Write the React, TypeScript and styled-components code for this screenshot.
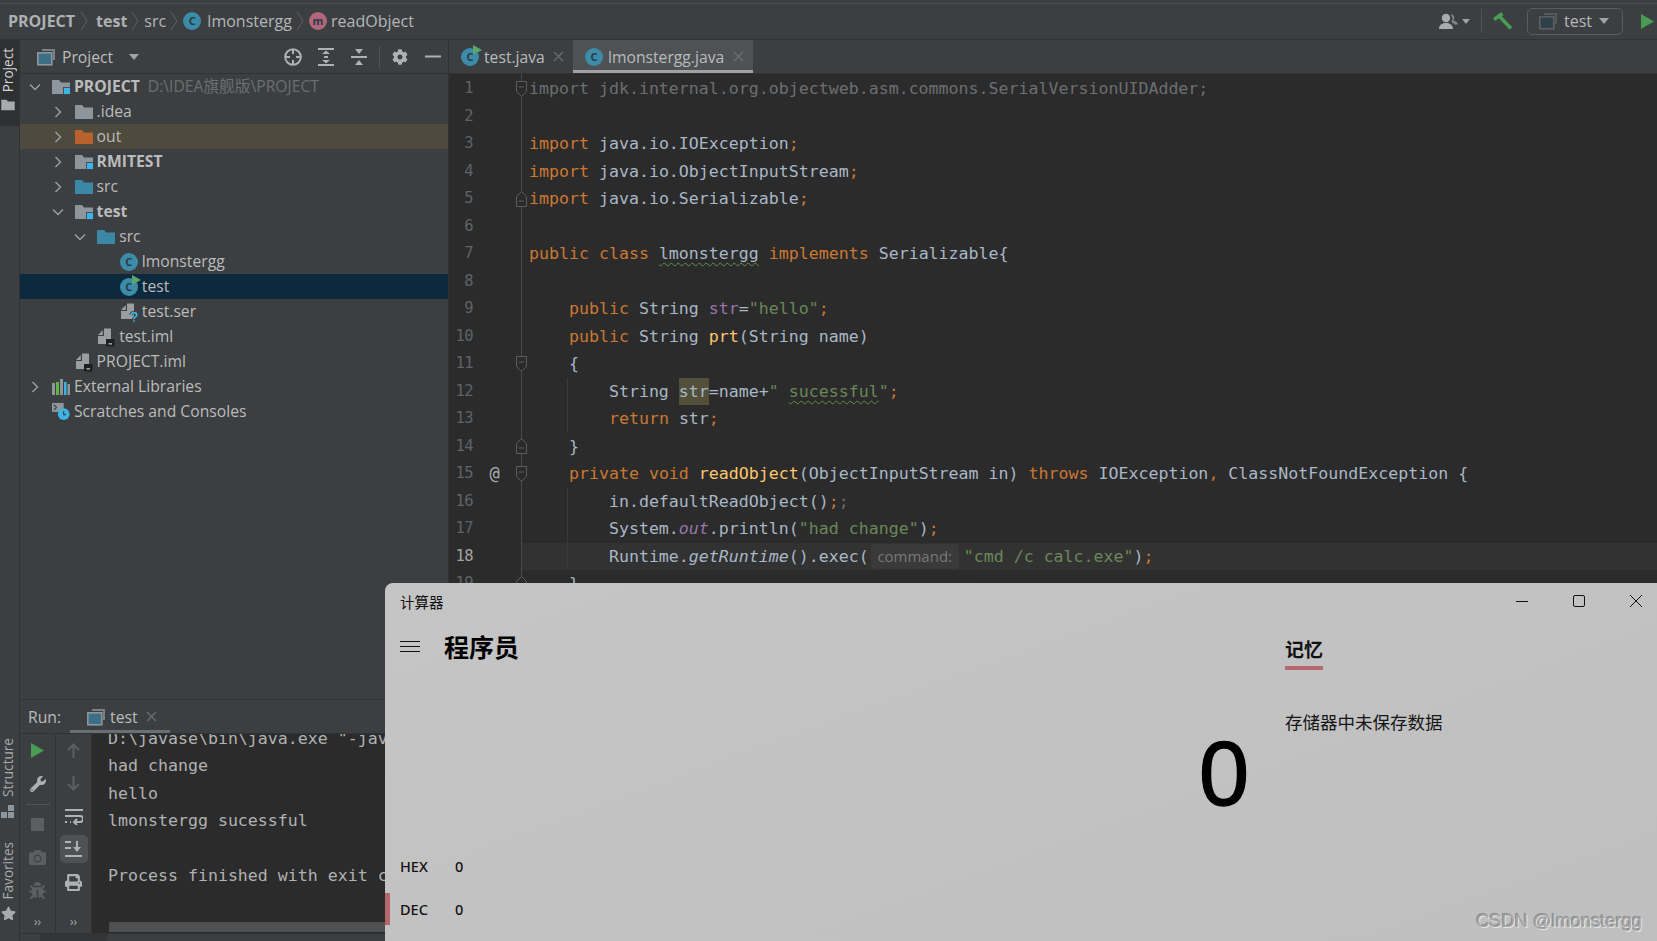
import React from 'react';
import styled, { createGlobalStyle } from 'styled-components';
import { FaCamera, FaBug, FaCog, FaPrint, FaStar, FaWrench } from 'react-icons/fa';

const UI = `"Open Sans", "Noto Sans CJK SC", sans-serif`;
const MONO = `"DejaVu Sans Mono", monospace`;

const Global = createGlobalStyle`
  html, body { margin: 0; padding: 0; width: 100%; height: 100%; overflow: hidden; background: #3c3f41; }
  #root { width: 1657px; height: 941px; }
  * { box-sizing: border-box; }
  svg { display: block; flex: none; }
`;

const Page = styled.div`
  position: relative; width: 1657px; height: 941px; display: flex; flex-direction: column;
  background: #3c3f41; color: #bbbbbb; font-family: ${UI}; font-size: 15.7px; overflow: hidden;
`;

/* ---------- top bar ---------- */
const TopBar = styled.header`
  height: 40px; flex: none; display: flex; align-items: center; padding: 3px 0 0 8px;
  border-bottom: 1px solid #323232; box-shadow: inset 0 3px 0 #3c3f41, inset 0 4px 0 #4d5052;
`;
const Crumb = styled.span<{ $bold?: boolean }>`
  font-size: 16px; font-weight: ${p => (p.$bold ? 700 : 400)}; color: ${p => (p.$bold ? '#aeb0b2' : '#b4b6b8')};
  white-space: pre;
`;
const CrumbSep = styled.span<{ $tight?: boolean }>`
  margin: ${p => (p.$tight ? '0 5px 0 4px' : '0 8px 0 5px')}; display: flex;
`;
const CrumbGap = styled.span`
  width: 2px; flex: none;
`;
const TopRight = styled.div`
  margin-left: auto; display: flex; align-items: center; height: 100%;
`;
const VSep = styled.div<{ $h?: number; $m?: string }>`
  width: 1px; height: ${p => p.$h ?? 24}px; background: #515456; margin: ${p => p.$m ?? '0'};
`;
const RunConfig = styled.div`
  width: 96px; height: 27px; margin: 0 18px 0 14px; border: 1.5px solid #5a5d5f; border-radius: 5px;
  display: flex; align-items: center; padding-left: 11px; gap: 7px;
`;
const Caret = styled.span<{ $c?: string; $w?: number }>`
  width: 0; height: 0; border-style: solid; border-color: ${p => p.$c ?? '#a0a2a4'} transparent transparent transparent;
  border-width: ${p => ((p.$w ?? 10) * 0.6)}px ${p => (p.$w ?? 10) / 2}px 0 ${p => (p.$w ?? 10) / 2}px;
`;
const UserWrap = styled.span`
  margin-right: 4px;
`;

/* ---------- main frame ---------- */
const Frame = styled.div`
  flex: 1; min-height: 0; display: flex;
`;
const Strip = styled.aside`
  width: 20px; flex: none; display: flex; flex-direction: column; border-right: 1px solid #323232;
`;
const StripButton = styled.div<{ $active?: boolean }>`
  display: flex; flex-direction: column; align-items: center; gap: 7px; font-size: 13.6px; width: 19px;
  background: ${p => (p.$active ? '#2f3031' : 'transparent')};
  color: ${p => (p.$active ? '#d4d5d6' : '#a8aaac')};
  padding: ${p => (p.$active ? '8px 3px 15px 0' : '0 3px 0 0')};
`;
const StripLabel = styled.span`
  writing-mode: vertical-rl; transform: rotate(180deg); line-height: 16px; white-space: pre;
`;
const StripBottom = styled.div`
  margin-top: auto; margin-bottom: 20px; display: flex; flex-direction: column; gap: 24px;
`;
const Workspace = styled.div`
  flex: 1; min-width: 0; display: flex; flex-direction: column;
`;
const Upper = styled.div`
  height: 659px; flex: none; display: flex;
`;

/* ---------- project tree ---------- */
const Sidebar = styled.section`
  width: 429px; flex: none; border-right: 1px solid #323232; display: flex; flex-direction: column;
`;
const PaneHeader = styled.div`
  height: 34px; flex: none; display: flex; align-items: center; padding-left: 17px;
  border-bottom: 1px solid #323232;
`;
const PaneTitle = styled.span`
  margin: 1px 16px 0 7px;
`;
const PaneTools = styled.div`
  margin-left: 144px; display: flex; align-items: center;
`;
const Tree = styled.div`
  display: flex; flex-direction: column;
`;
const Row = styled.div<{ $depth: number; $tone?: 'out' | 'sel' }>`
  height: 25px; display: flex; align-items: center; white-space: pre;
  padding-left: ${p => 8 + p.$depth * 22.6}px;
  background: ${p => (p.$tone === 'out' ? '#4e4a3e' : p.$tone === 'sel' ? '#0d293e' : 'transparent')};
`;
const Twist = styled.span`
  width: 14px; margin-right: 10px; flex: none; display: flex; justify-content: center;
`;
const RowLabel = styled.span<{ $bold?: boolean }>`
  margin: 0 0 2px 4px; font-weight: ${p => (p.$bold ? 700 : 400)};
`;
const PathHint = styled.span`
  margin: 0 0 2px 8px; color: #6b6e70;
`;
const Badge = styled.span<{ $kind: 'c' | 'm' }>`
  position: relative; width: 18px; height: 18px; flex: none; border-radius: 50%;
  background: ${p => (p.$kind === 'c' ? '#3c8ba8' : '#b2667c')};
  color: #263b44; font: 700 11px/17px ${UI}; text-align: center;
`;
const RunMark = styled.svg`
  position: absolute; top: -3px; right: -3px;
`;

/* ---------- editor ---------- */
const Editor = styled.section`
  flex: 1; min-width: 0; display: flex; flex-direction: column;
`;
const Tabs = styled.div`
  height: 34px; flex: none; display: flex; border-bottom: 1px solid #323232;
`;
const Tab = styled.div<{ $active?: boolean; $w: number }>`
  position: relative; width: ${p => p.$w}px; display: flex; align-items: center; padding-left: 12px;
  background: ${p => (p.$active ? '#4e5254' : 'transparent')};
  ${p => (p.$active ? 'box-shadow: inset 0 -3px 0 #a0a3a6;' : '')}
`;
const TabLabel = styled.span`
  margin: 1px 0 0 5px; color: #b9bbbd;
`;
const TabClose = styled.span`
  position: absolute; right: 9px; top: 11px;
`;
const Code = styled.div`
  flex: 1; min-height: 0; overflow: hidden; padding-top: 1px;
  background: linear-gradient(#484a4b, #484a4b) 72px 0 / 1px 100% no-repeat, #2b2b2b;
  font: 16.6px/27.53px ${MONO}; color: #a9b7c6;
`;
const Line = styled.div<{ $current?: boolean; $guide?: boolean }>`
  position: relative; height: 27.53px; display: flex; white-space: pre;
  ${p => (p.$current ? 'background: linear-gradient(#323232, #323232) 73px 0 no-repeat;' : '')}
  ${p => p.$guide ? `&::before { content: ''; position: absolute; left: 118px; top: 0; bottom: 0; width: 1px; background: #3b3b3b; }` : ''}
`;
const LineNo = styled.span<{ $current?: boolean }>`
  width: 24px; flex: none; text-align: right; font-family: ${MONO}; font-size: 15.5px;
  color: ${p => (p.$current ? '#a4a3a3' : '#606366')}; letter-spacing: -0.6px;
`;
const Annot = styled.span`
  width: 43px; flex: none; text-align: center; color: #a9adb0; font-size: 17px;
`;
const Fold = styled.span`
  width: 13px; flex: none; display: flex; align-items: center;
`;
const Tok = styled.span<{ $k?: string }>`
  color: ${p => ({ kw: '#cc7832', str: '#6a8759', wstr: '#6a8759', fld: '#9876aa', ifl: '#9876aa', mth: '#ffc66d', dim: '#6c6f71' } as Record<string, string>)[p.$k ?? ''] ?? '#a9b7c6'};
  ${p => (p.$k === 'ifl' || p.$k === 'it' ? 'font-style: italic;' : '')}
  ${p => (p.$k === 'wav' || p.$k === 'wstr' ? 'text-decoration: underline wavy #5f8f4f 1px; text-underline-offset: 3px;' : '')}
  ${p => (p.$k === 'hl' ? 'background: #52503a; display: inline-block; height: 27.53px;' : '')}
`;
const Inlay = styled.span`
  display: inline-block; width: 88px; height: 25px; margin: 1px 5px 0 2px; border-radius: 4px;
  background: #3a3a3a; color: #787878; font: 15px/24px ${UI}; text-align: center;
`;

/* ---------- run panel ---------- */
const RunPanel = styled.section`
  flex: 1; min-height: 0; display: flex; flex-direction: column; border-top: 1px solid #323232;
`;
const RunHeader = styled.div`
  height: 34px; flex: none; display: flex; align-items: center; padding-left: 8px; border-bottom: 1px solid #323232;
`;
const RunTab = styled.div`
  height: 100%; width: 100px; margin-left: 9px; display: flex; align-items: center; padding-left: 17px; gap: 5px;
  box-shadow: inset 0 -3px 0 #6b6f72;
`;
const RunTabClose = styled.span`
  margin-left: 3px;
`;
const RunBody = styled.div`
  flex: 1; min-height: 0; display: flex;
`;
const ToolCol = styled.div<{ $w: number }>`
  width: ${p => p.$w}px; flex: none; display: flex; flex-direction: column; align-items: center;
  padding-bottom: 3px; border-right: 1px solid #323232; color: #afb1b3;
`;
const ToolBtn = styled.div<{ $on?: boolean; $dim?: boolean }>`
  width: 28px; height: 33px; display: flex; align-items: center; justify-content: center;
  color: ${p => (p.$dim ? '#5c5f61' : '#afb1b3')};
  ${p => (p.$on ? 'background: #4e5254; border-radius: 5px; height: 28px; margin: 2px 0 3px;' : '')}
`;
const ToolSep = styled.div`
  width: 24px; height: 1px; background: #515456; margin: 4px 0 3px;
`;
const More = styled.span`
  margin-top: auto; font-size: 12px; line-height: 16px; color: #a8aaac;
`;
const Console = styled.div`
  flex: 1; min-width: 0; display: flex; flex-direction: column; background: #2b2b2b; padding-left: 16px;
  overflow: hidden;
`;
const Output = styled.pre`
  flex: 1; min-height: 0; margin: -9px 0 0; font: 16.6px/27.35px ${MONO}; color: #b0b2b3;
`;
const HScroll = styled.div`
  height: 10px; margin: 0 0 1px 1px; background: #4f5051; flex: none;
`;
const StatusBar = styled.footer`
  height: 8px; flex: none; border-top: 1px solid #323232; padding-left: 20px; display: flex;
`;
const StatusSeg = styled.div`
  width: 67px; height: 100%; background: #333537;
`;

/* ---------- calculator window ---------- */
const CalcWindow = styled.section`
  position: absolute; z-index: 2; left: 385px; top: 583px; right: 0; bottom: 0; border-radius: 8px 0 0 0;
  background: linear-gradient(160deg, #c5c5c5 0%, #c2c2c2 50%, #bfbfbf 100%);
  color: #000; font-family: "Noto Sans CJK SC", "Noto Sans", sans-serif; display: flex; flex-direction: column;
`;
const CalcTitle = styled.div`
  height: 40px; flex: none; display: flex; align-items: center; padding: 0 0 4px 15px; font-size: 14.5px; color: #111;
`;
const WinControls = styled.div`
  margin-left: auto; display: flex; align-items: center; gap: 45px; padding-right: 15px; margin-top: -1px;
`;
const CalcBody = styled.div`
  flex: 1; min-height: 0; display: flex;
`;
const CalcMain = styled.div`
  width: 900px; flex: none; display: flex; flex-direction: column;
`;
const CalcHead = styled.div`
  height: 52px; flex: none; display: flex; align-items: center; padding: 0 0 6px 15px; gap: 24px;
  font-size: 25px; font-weight: 700;
`;
const Display = styled.div`
  margin-top: 49px; padding-right: 36px; text-align: right; height: 100px;
  font: 400 90px/100px "Liberation Sans", sans-serif; -webkit-text-stroke: 1.4px #000;
`;
const RadixList = styled.div`
  margin-top: auto; padding-bottom: 16px; display: flex; flex-direction: column; gap: 11px;
`;
const RadixRow = styled.div<{ $active?: boolean }>`
  height: 32px; display: flex; align-items: center; padding-left: 10px;
  border-left: 5px solid ${p => (p.$active ? '#b5686b' : 'transparent')};
  font: 500 14.5px "Noto Sans", sans-serif; color: #111;
`;
const RadixName = styled.span`
  width: 55px;
`;
const Memory = styled.aside`
  flex: 1; min-width: 0; display: flex; flex-direction: column; align-items: flex-start; padding-top: 13px;
`;
const MemoryTab = styled.div`
  width: 38px; padding-bottom: 4px; font-size: 19px; font-weight: 700; line-height: 26px; white-space: nowrap;
  border-bottom: 4px solid #b5686b; color: #111;
`;
const MemoryEmpty = styled.div`
  margin-top: 39px; font-size: 17.5px; line-height: 26px; color: #151515;
`;
const Watermark = styled.div`
  position: absolute; right: 15px; bottom: 9px; font: 18.3px "Liberation Sans", sans-serif;
  color: #a3a4a4; text-shadow: 1px 1px 0 #e6e6e6, -1px -1px 0 #8a8a8a;
`;

/* ---------- icons ---------- */
const Chevron = ({ open, c = '#9da0a2' }: { open?: boolean; c?: string }) => (
  <svg width="12" height="12" viewBox="0 0 12 12" fill="none" stroke={c} strokeWidth="1.4">
    {open ? <path d="M1 3.5 6 8.5 11 3.5" /> : <path d="M3.5 1 8.5 6 3.5 11" />}
  </svg>
);
const CrumbChevron = () => (
  <svg width="8" height="20" viewBox="0 0 8 20" fill="none" stroke="#5f6264">
    <path d="M1 1 7 10 1 19" />
  </svg>
);
const Folder = ({ c = '#8c969c', mod, small }: { c?: string; mod?: boolean; small?: boolean }) => (
  <svg width={small ? 14 : 18} height={small ? 12 : 16} viewBox="0 0 18 16">
    <path d="M0 1h7l2 2.4h9V15H0z" fill={c} />
    {mod && <rect x="11.5" y="8.5" width="7" height="7" fill="#3db3e6" stroke="#3c3f41" strokeWidth=".8" />}
  </svg>
);
const FileDoc = ({ mark }: { mark: 'q' | 'box' }) => (
  <svg width="18" height="20" viewBox="0 0 18 20">
    <path d="M7 1.500h7V17H1V9h6z" fill="#9a9ea1" />
    <path d="M1 8 5.800 3V8z" fill="#9a9ea1" />
    {mark === 'box' ? (
      <g><rect x="9" y="12" width="8.500" height="7.500" fill="#1f1f1f" /><rect x="11.500" y="16.200" width="3.500" height="1.300" fill="#bbb" /></g>
    ) : (
      <g fill="none">
        <path d="M11 13c.3-3.200 5.700-3.200 5.700 0 0 2.200-2.800 2-2.800 4.300M13.900 18.200v1.600" stroke="#3c3f41" strokeWidth="3.400" />
        <path d="M11 13c.3-3.200 5.700-3.200 5.700 0 0 2.200-2.800 2-2.800 4.300M13.900 18.200v1.600" stroke="#3db3e6" strokeWidth="1.700" />
      </g>
    )}
  </svg>
);
const LibIcon = () => (
  <svg width="18" height="16" viewBox="0 0 18 16">
    <rect x="0" y="4" width="3" height="12" fill="#8c969c" />
    <rect x="4" y="3" width="3" height="13" fill="#62b543" />
    <rect x="8" y="0" width="3" height="16" fill="#8c969c" />
    <rect x="12" y="3" width="2.500" height="13" fill="#3db3e6" />
    <rect x="15.500" y="5" width="2.500" height="11" fill="#8c969c" />
  </svg>
);
const ScratchIcon = () => (
  <svg width="18" height="19" viewBox="0 0 20 19">
    <rect x="0" y="0" width="13" height="10" fill="#8c969c" />
    <path d="M2 2 5 5 2 8" fill="none" stroke="#3c3f41" strokeWidth="1.2" />
    <circle cx="13" cy="12.500" r="6.500" fill="#3db3e6" />
    <path d="M13 9v4h2.500" fill="none" stroke="#3c3f41" strokeWidth="1.200" />
  </svg>
);
const WindowIcon = ({ dim }: { dim?: boolean }) => (
  <svg width="18" height="18" viewBox="0 0 18 18">
    <path d="M5 1h13v11h-2V3H5z" fill={dim ? '#55585a' : '#7b8083'} />
    <rect x="0.800" y="4.800" width="14" height="12" fill={dim ? '#2f4049' : '#3c6f85'} stroke={dim ? '#5c6063' : '#8c969c'} strokeWidth="1.600" />
  </svg>
);
const UserIcon = () => (
  <svg width="19" height="16" viewBox="0 0 19 16" fill="#a8aaac">
    <path d="M12 1a3.500 3.500 0 0 1 2 6.200c2 .8 4.500 1.600 5 4.300h-3.500c-.8-1.500-2-2-3.200-2.600a5.500 5.500 0 0 0 .2-6.400z" fill="#85888a" />
    <circle cx="7" cy="5" r="4.200" />
    <path d="M0 16c0-4 2.500-4.800 4.800-6h4.400c2.300 1.200 4.800 2 4.800 6z" />
  </svg>
);
const ClassBadge = ({ run }: { run?: boolean }) => (
  <Badge $kind="c">C{run && (
    <RunMark width="9" height="10" viewBox="0 0 9 10"><path d="M0 0 9 5 0 10z" fill="#59a869" /></RunMark>
  )}</Badge>
);
const Close = ({ c = '#6e7072', s = 11 }: { c?: string; s?: number }) => (
  <svg width={s} height={s} viewBox="0 0 11 11" stroke={c} strokeWidth="1.100"><path d="M1 1 10 10M10 1 1 10" /></svg>
);
const Play = ({ w = 13, h = 15 }: { w?: number; h?: number }) => (
  <svg width={w} height={h} viewBox="0 0 13 15"><path d="M0 0 13 7.500 0 15z" fill="#499c54" /></svg>
);
const Hammer = () => (
  <svg width="20" height="18" viewBox="0 0 20 18" fill="none" stroke="#499c54" strokeWidth="3.600">
    <path d="M6.500 4.500 18 16.500" /><path d="M1 7.500 9.500 1.500" />
  </svg>
);
const Crosshair = () => (
  <svg width="20" height="20" viewBox="0 0 20 20" fill="none" stroke="#afb1b3" strokeWidth="2">
    <circle cx="10" cy="10" r="7.800" /><path d="M10 2v5M10 13v5M2 10h5M13 10h5" />
  </svg>
);
const ExpandAll = () => (
  <svg width="16" height="18" viewBox="0 0 16 18" fill="#afb1b3">
    <rect y="0" width="16" height="2" /><rect y="16" width="16" height="2" />
    <path d="M4 6 8 2.500 12 6zM4 12 8 15.500 12 12z" /><rect x="6" y="8" width="4" height="2" />
  </svg>
);
const CollapseAll = () => (
  <svg width="16" height="18" viewBox="0 0 16 18" fill="#afb1b3">
    <rect y="8" width="16" height="2" /><path d="M4 1 8 6 12 1zM4 17 8 12 12 17z" />
  </svg>
);
const Minus = () => <svg width="16" height="3" viewBox="0 0 16 3"><rect width="16" height="2" y=".5" fill="#afb1b3" /></svg>;
const Arrow = ({ down }: { down?: boolean }) => (
  <svg width="13" height="15" viewBox="0 0 13 15" fill="none" stroke="#5c5f61" strokeWidth="2">
    {down ? <path d="M6.500 0v13M1 8l5.500 5.500L12 8" /> : <path d="M6.500 15V2M1 7l5.500-5.500L12 7" />}
  </svg>
);
const Wrap = () => (
  <svg width="18" height="17" viewBox="0 0 18 17" fill="none" stroke="#afb1b3" strokeWidth="2">
    <path d="M0 2h18M0 8h15a2.500 2.500 0 0 1 0 6H9M12 11l-3 3 3 3M0 14h2M5 14h1" />
  </svg>
);
const ScrollEnd = () => (
  <svg width="17" height="16" viewBox="0 0 17 16" fill="#afb1b3">
    <rect y="0" width="6" height="2" /><rect y="6" width="6" height="2" /><rect y="14" width="17" height="2" />
    <path d="M11 0h2v6h3l-4 5-4-5h3z" />
  </svg>
);
const Square = () => <svg width="13" height="13"><rect width="13" height="13" fill="#5c5f61" /></svg>;
const FoldMark = ({ up }: { up?: boolean }) => (
  <svg width="11" height="16" viewBox="0 0 11 16" fill="#2b2b2b" stroke="#5b5d5f">
    {up
      ? <path d="M.5 15.500V5.500L5.500.5l5 5v10zM3 10h5" />
      : <path d="M.5.5h10v10l-5 5-5-5zM3 6h5" />}
  </svg>
);

/* ---------- data ---------- */
type Tk = [string, string];
type L = { t?: Tk[]; fold?: 'open' | 'close'; at?: boolean; guide?: boolean; current?: boolean; inlay?: Tk[] };
const I4 = '    ';
const lines: L[] = [
  { t: [['dim', 'import jdk.internal.org.objectweb.asm.commons.SerialVersionUIDAdder;']], fold: 'open' },
  {},
  { t: [['kw', 'import '], ['', 'java.io.IOException'], ['kw', ';']] },
  { t: [['kw', 'import '], ['', 'java.io.ObjectInputStream'], ['kw', ';']] },
  { t: [['kw', 'import '], ['', 'java.io.Serializable'], ['kw', ';']], fold: 'close' },
  {},
  { t: [['kw', 'public class '], ['wav', 'lmonstergg'], ['kw', ' implements '], ['', 'Serializable{']] },
  {},
  { t: [['', I4], ['kw', 'public '], ['', 'String '], ['fld', 'str'], ['', '='], ['str', '"hello"'], ['kw', ';']] },
  { t: [['', I4], ['kw', 'public '], ['', 'String '], ['mth', 'prt'], ['', '(String name)']] },
  { t: [['', I4 + '{']], fold: 'open' },
  { t: [['', I4 + I4 + 'String '], ['hl', 'str'], ['', '=name+'], ['str', '" '], ['wstr', 'sucessful'], ['str', '"'], ['kw', ';']], guide: true },
  { t: [['', I4 + I4], ['kw', 'return '], ['', 'str'], ['kw', ';']], guide: true },
  { t: [['', I4 + '}']], fold: 'close' },
  { t: [['', I4], ['kw', 'private void '], ['mth', 'readObject'], ['', '(ObjectInputStream in) '], ['kw', 'throws '], ['', 'IOException'], ['kw', ', '], ['', 'ClassNotFoundException {']], fold: 'open', at: true },
  { t: [['', I4 + I4 + 'in.defaultReadObject()'], ['kw', ';'], ['dim', ';']], guide: true },
  { t: [['', I4 + I4 + 'System.'], ['ifl', 'out'], ['', '.println('], ['str', '"had change"'], ['', ')'], ['kw', ';']], guide: true },
  { t: [['', I4 + I4 + 'Runtime.'], ['it', 'getRuntime'], ['', '().exec(']], inlay: [['str', '"cmd /c calc.exe"'], ['', ')'], ['kw', ';']], guide: true, current: true },
  { t: [['', I4 + '}']], fold: 'close' },
];

const Toks = ({ t }: { t: Tk[] }) => <>{t.map(([k, s], i) => <Tok key={i} $k={k}>{s}</Tok>)}</>;

export default function App() {
  return (
    <Page>
      <Global />
      <TopBar>
        <Crumb $bold>PROJECT</Crumb><CrumbSep><CrumbChevron /></CrumbSep>
        <Crumb $bold>test</Crumb><CrumbSep $tight><CrumbChevron /></CrumbSep>
        <Crumb>src</Crumb><CrumbSep $tight><CrumbChevron /></CrumbSep>
        <ClassBadge /><CrumbGap /><Crumb> lmonstergg</Crumb><CrumbSep $tight><CrumbChevron /></CrumbSep>
        <Badge $kind="m">m</Badge><Crumb> readObject</Crumb>
        <TopRight>
          <UserWrap><UserIcon /></UserWrap>
          <Caret $w={9} />
          <VSep $m="0 11px 0 11px" />
          <Hammer />
          <RunConfig>
            <WindowIcon dim />
            <Crumb>test</Crumb>
            <Caret $w={11} />
          </RunConfig>
          <Play />
          <VSep $h={0} $m="0 2px 0 0" />
        </TopRight>
      </TopBar>

      <Frame>
        <Strip>
          <StripButton $active>
            <StripLabel>Project</StripLabel>
            <Folder c="#a8aaac" small />
          </StripButton>
          <StripBottom>
            <StripButton>
              <StripLabel>Structure</StripLabel>
              <svg width="14" height="13" viewBox="0 0 14 13" fill="#8c969c"><rect x="0" y="7" width="6" height="6" /><rect x="7" y="0" width="6" height="6" /><rect x="7" y="7" width="6" height="6" /></svg>
            </StripButton>
            <StripButton>
              <StripLabel>Favorites</StripLabel>
              <FaStar size={15} color="#a8aaac" />
            </StripButton>
          </StripBottom>
        </Strip>

        <Workspace>
          <Upper>
            <Sidebar>
              <PaneHeader>
                <WindowIcon />
                <PaneTitle>Project</PaneTitle>
                <Caret $w={10} />
                <PaneTools>
                  <Crosshair />
                  <VSep $h={0} $m="0 7px" />
                  <ExpandAll />
                  <VSep $h={0} $m="0 8px" />
                  <CollapseAll />
                  <VSep $h={22} $m="0 12px" />
                  <FaCog size={16} color="#afb1b3" />
                  <VSep $h={0} $m="0 8px" />
                  <Minus />
                </PaneTools>
              </PaneHeader>
              <Tree>
                <Row $depth={0}><Twist><Chevron open /></Twist><Folder mod /><RowLabel $bold>PROJECT</RowLabel><PathHint>D:\IDEA旗舰版\PROJECT</PathHint></Row>
                <Row $depth={1}><Twist><Chevron /></Twist><Folder /><RowLabel>.idea</RowLabel></Row>
                <Row $depth={1} $tone="out"><Twist><Chevron /></Twist><Folder c="#b8622e" /><RowLabel>out</RowLabel></Row>
                <Row $depth={1}><Twist><Chevron /></Twist><Folder mod /><RowLabel $bold>RMITEST</RowLabel></Row>
                <Row $depth={1}><Twist><Chevron /></Twist><Folder c="#3a87a6" /><RowLabel>src</RowLabel></Row>
                <Row $depth={1}><Twist><Chevron open /></Twist><Folder mod /><RowLabel $bold>test</RowLabel></Row>
                <Row $depth={2}><Twist><Chevron open /></Twist><Folder c="#3a87a6" /><RowLabel>src</RowLabel></Row>
                <Row $depth={3}><Twist /><ClassBadge /><RowLabel>lmonstergg</RowLabel></Row>
                <Row $depth={3} $tone="sel"><Twist /><ClassBadge run /><RowLabel>test</RowLabel></Row>
                <Row $depth={3}><Twist /><FileDoc mark="q" /><RowLabel>test.ser</RowLabel></Row>
                <Row $depth={2}><Twist /><FileDoc mark="box" /><RowLabel>test.iml</RowLabel></Row>
                <Row $depth={1}><Twist /><FileDoc mark="box" /><RowLabel>PROJECT.iml</RowLabel></Row>
                <Row $depth={0}><Twist><Chevron /></Twist><LibIcon /><RowLabel>External Libraries</RowLabel></Row>
                <Row $depth={0}><Twist /><ScratchIcon /><RowLabel>Scratches and Consoles</RowLabel></Row>
              </Tree>
            </Sidebar>

            <Editor>
              <Tabs>
                <Tab $w={124}><ClassBadge run /><TabLabel>test.java</TabLabel><TabClose><Close /></TabClose></Tab>
                <Tab $w={180} $active><ClassBadge /><TabLabel>lmonstergg.java</TabLabel><TabClose><Close /></TabClose></Tab>
              </Tabs>
              <Code>
                {lines.map((l, i) => (
                  <Line key={i} $current={l.current} $guide={l.guide}>
                    <LineNo $current={l.current}>{i + 1}</LineNo>
                    <Annot>{l.at ? '@' : ''}</Annot>
                    <Fold>{l.fold && <FoldMark up={l.fold === 'close'} />}</Fold>
                    <span>
                      {l.t && <Toks t={l.t} />}
                      {l.inlay && <><Inlay>command:</Inlay><Toks t={l.inlay} /></>}
                    </span>
                  </Line>
                ))}
              </Code>
            </Editor>
          </Upper>

          <RunPanel>
            <RunHeader>
              <span>Run:</span>
              <RunTab><WindowIcon /><span>test</span><RunTabClose><Close /></RunTabClose></RunTab>
            </RunHeader>
            <RunBody>
              <ToolCol $w={36}>
                <ToolBtn><Play /></ToolBtn>
                <ToolBtn><FaWrench size={16} /></ToolBtn>
                <ToolSep />
                <ToolBtn><Square /></ToolBtn>
                <ToolBtn $dim><FaCamera size={17} /></ToolBtn>
                <ToolBtn $dim><FaBug size={17} /></ToolBtn>
                <More>››</More>
              </ToolCol>
              <ToolCol $w={36}>
                <ToolBtn><Arrow /></ToolBtn>
                <ToolBtn><Arrow down /></ToolBtn>
                <ToolBtn><Wrap /></ToolBtn>
                <ToolBtn $on><ScrollEnd /></ToolBtn>
                <ToolBtn><FaPrint size={17} /></ToolBtn>
                <More>››</More>
              </ToolCol>
              <Console>
                <Output>{`D:\\javase\\bin\\java.exe "-javaagent:D:\\IDEA\\lib\\idea_rt.jar"
had change
hello
lmonstergg sucessful

Process finished with exit code 0`}</Output>
                <HScroll />
              </Console>
            </RunBody>
          </RunPanel>
          <StatusBar><StatusSeg /></StatusBar>
        </Workspace>
      </Frame>

      <CalcWindow>
        <CalcTitle>
          计算器
          <WinControls>
            <svg width="12" height="12" stroke="#111" strokeWidth="1"><path d="M0 6.500h12" /></svg>
            <svg width="12" height="12" fill="none" stroke="#111" strokeWidth="1"><rect x=".5" y=".5" width="11" height="11" rx="1.500" /></svg>
            <svg width="12" height="12" stroke="#111" strokeWidth="1"><path d="M0 0 12 12M12 0 0 12" /></svg>
          </WinControls>
        </CalcTitle>
        <CalcBody>
          <CalcMain>
            <CalcHead>
              <svg width="20" height="11" stroke="#111" strokeWidth="1"><path d="M0 .5h20M0 5.500h20M0 10.500h20" /></svg>
              程序员
            </CalcHead>
            <Display>0</Display>
            <RadixList>
              <RadixRow><RadixName>HEX</RadixName><span>0</span></RadixRow>
              <RadixRow $active><RadixName>DEC</RadixName><span>0</span></RadixRow>
            </RadixList>
          </CalcMain>
          <Memory>
            <MemoryTab>记忆</MemoryTab>
            <MemoryEmpty>存储器中未保存数据</MemoryEmpty>
          </Memory>
        </CalcBody>
        <Watermark>CSDN @lmonstergg</Watermark>
      </CalcWindow>
    </Page>
  );
}
